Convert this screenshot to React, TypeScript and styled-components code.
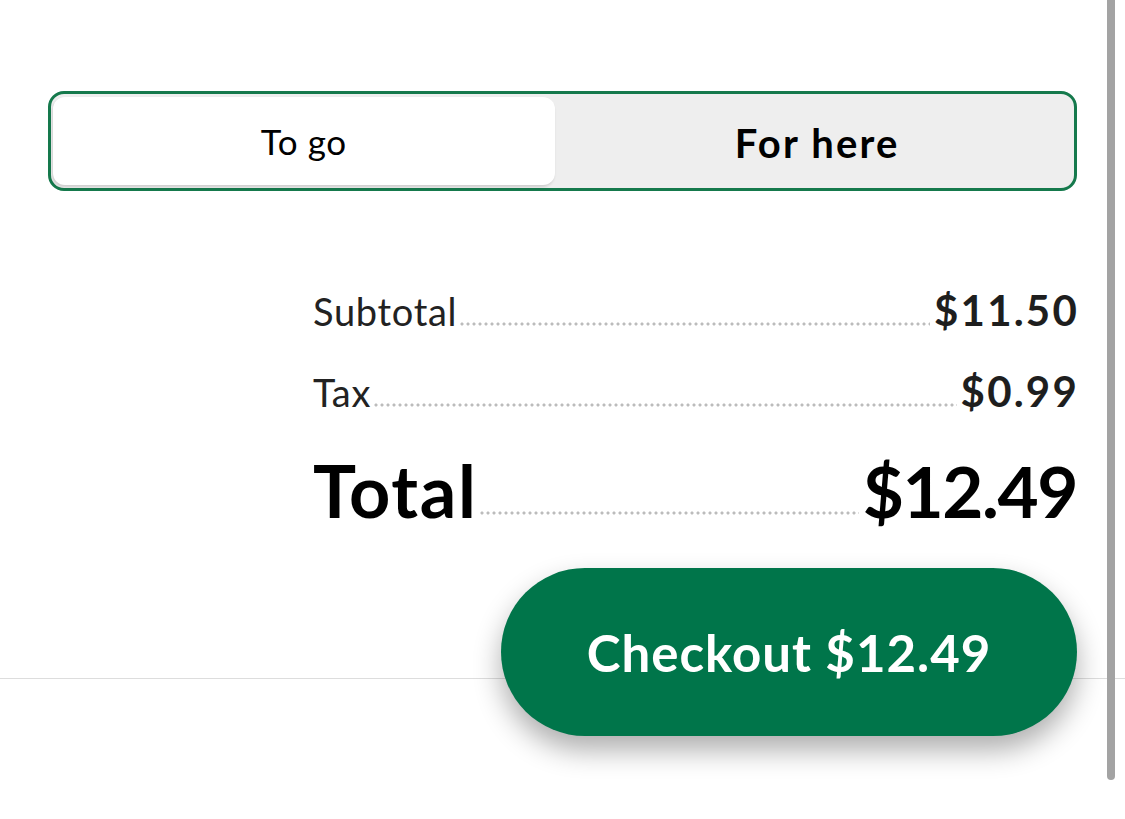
import React, { useState } from "react";
import styled, { createGlobalStyle } from "styled-components";

type Line = {
  label: string;
  amount: string;
  big?: boolean;
};

const lines: Line[] = [
  { label: "Subtotal", amount: "$11.50" },
  { label: "Tax", amount: "$0.99" },
  { label: "Total", amount: "$12.49", big: true },
];

function App() {
  const [mode, setMode] = useState<"togo" | "here">("togo");

  return (
    <>
      <GlobalStyle />
      <Page>
        <Content>
          <Toggle>
            <Segment $active={mode === "togo"} onClick={() => setMode("togo")}>
              To go
            </Segment>
            <Segment $active={mode === "here"} onClick={() => setMode("here")}>
              For here
            </Segment>
          </Toggle>

          <Totals>
            {lines.map((line) => (
              <Row key={line.label}>
                <Label $big={line.big}>{line.label}</Label>
                <Leader $big={line.big} />
                <Amount $big={line.big}>{line.amount}</Amount>
              </Row>
            ))}
          </Totals>

          <ButtonRow>
            <Checkout>Checkout $12.49</Checkout>
          </ButtonRow>
        </Content>
        <Footer />
        <ScrollThumb />
      </Page>
    </>
  );
}

export default App;

const GlobalStyle = createGlobalStyle`
  html, body {
    margin: 0;
    padding: 0;
    background: #fff;
    overflow: hidden;
  }
  body {
    font-family: Lato, "Open Sans", sans-serif;
    color: #1e1e1e;
  }
`;

const Page = styled.div`
  min-height: 819px;
  background: #fff;
`;

const Content = styled.div`
  padding: 91px 48px 0 48px;
`;

const Toggle = styled.div`
  display: grid;
  grid-template-columns: 1fr 1fr;
  height: 100px;
  box-sizing: border-box;
  padding: 3px 2px;
  border: 3px solid #15794c;
  border-radius: 16px;
  background: #eeeeee;
`;

const Segment = styled.button<{ $active?: boolean }>`
  border: none;
  margin: 0;
  padding: ${(p) => (p.$active ? "0" : "4px 0 0")};
  cursor: pointer;
  font-family: Lato, "Open Sans", sans-serif;
  color: #000;
  border-radius: 12px;
  background: ${(p) => (p.$active ? "#fff" : "transparent")};
  box-shadow: ${(p) =>
    p.$active ? "-1px 2px 3px rgba(0, 0, 0, 0.14)" : "none"};
  font-size: ${(p) => (p.$active ? "35px" : "40px")};
  font-weight: ${(p) => (p.$active ? 400 : 700)};
  letter-spacing: ${(p) => (p.$active ? "0.6px" : "2.2px")};
  margin-right: ${(p) => (p.$active ? "8px" : "0")};
`;

const Totals = styled.div`
  width: 764px;
  margin: 94px 0 0 auto;
  display: flex;
  flex-direction: column;
  gap: 31px;
`;

const Row = styled.div`
  display: flex;
  align-items: baseline;
`;

const Label = styled.span<{ $big?: boolean }>`
  font-size: ${(p) => (p.$big ? "72px" : "38px")};
  font-weight: ${(p) => (p.$big ? 700 : 400)};
  letter-spacing: ${(p) => (p.$big ? "1.6px" : "0.7px")};
  color: ${(p) => (p.$big ? "#000" : "#222")};
`;

const Leader = styled.span<{ $big?: boolean }>`
  flex: 1;
  height: 12px;
  margin: 0 4px 0 2px;
  background-image: radial-gradient(
    circle,
    #bcbcbc 1.3px,
    transparent 1.8px
  );
  background-size: 6px 4px;
  background-repeat: repeat-x;
  background-position: ${(p) => (p.$big ? "0 5px" : "0 bottom")};
`;

const Amount = styled.span<{ $big?: boolean }>`
  font-size: ${(p) => (p.$big ? "71px" : "42px")};
  font-weight: 700;
  letter-spacing: ${(p) => (p.$big ? "-1.4px" : "2.2px")};
  margin-right: ${(p) => (p.$big ? "0" : "-2px")};
  color: ${(p) => (p.$big ? "#000" : "#1e1e1e")};
`;

const ButtonRow = styled.div`
  display: flex;
  justify-content: flex-end;
  margin-top: 35px;
  margin-bottom: -58px;
  position: relative;
  z-index: 1;
`;

const Checkout = styled.button`
  width: 576px;
  height: 168px;
  border: none;
  border-radius: 84px;
  background: #00754a;
  color: #fff;
  font-family: Lato, "Open Sans", sans-serif;
  font-size: 51px;
  font-weight: 700;
  letter-spacing: 1px;
  cursor: pointer;
  box-shadow: 0 14px 28px rgba(0, 0, 0, 0.32);
`;

const Footer = styled.div`
  border-top: 1px solid #dddddd;
  height: 140px;
`;

const ScrollThumb = styled.div`
  position: fixed;
  top: -10px;
  right: 10px;
  width: 8px;
  height: 790px;
  border-radius: 4px;
  background: #a3a3a3;
  z-index: 2;
`;
